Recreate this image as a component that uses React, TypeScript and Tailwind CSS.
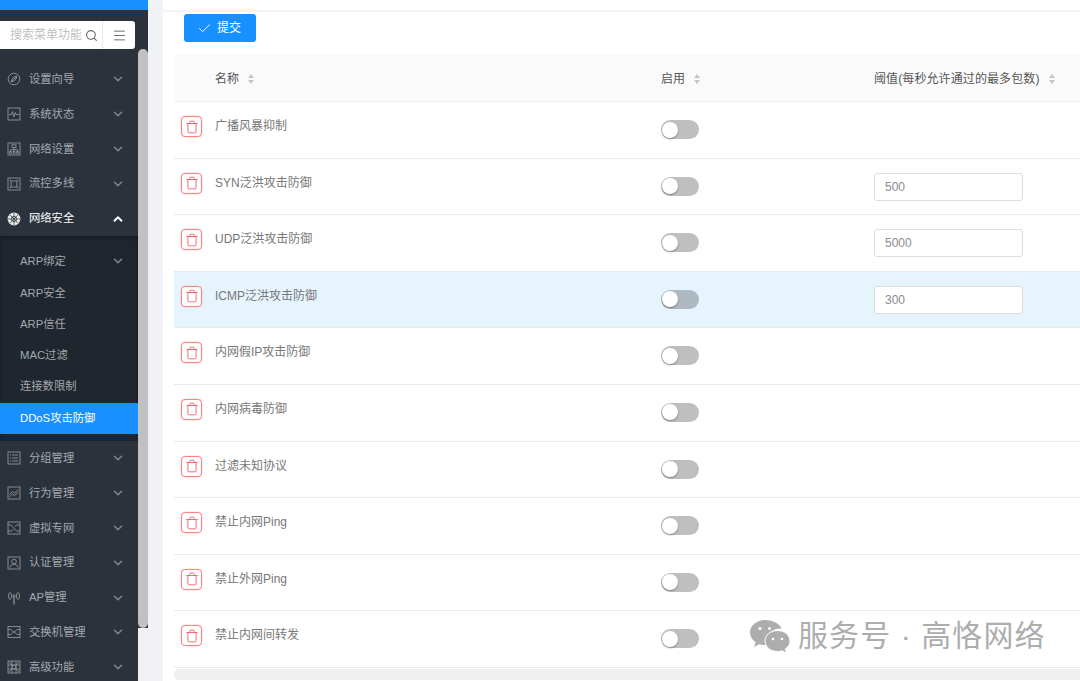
import { Check, ChevronDown, ChevronUp, Menu, Search, Trash } from "lucide-react";
import type { ReactNode } from "react";

const font = "font-['Liberation_Sans','Noto_Sans_CJK_SC',sans-serif]";

function IconBox({ children }: { children: ReactNode }) {
  return (
    <svg viewBox="0 0 14 14" className="h-[14px] w-[14px] shrink-0 text-[#8f949a]" fill="none" stroke="currentColor" strokeWidth="0.9">
      {children}
    </svg>
  );
}

const icons: Record<string, ReactNode> = {
  wizard: (
    <IconBox>
      <circle cx="7" cy="7" r="5.800" />
      <path d="M4.200 9.800C4.200 7 7 4.200 9.800 4.200 9.800 7 7 9.800 4.200 9.800zM4.200 9.800 9.800 4.200" />
    </IconBox>
  ),
  status: (
    <IconBox>
      <rect x="1" y="1" width="12" height="12" />
      <path d="M2 7.500h2.200l1.200-3 1.400 5.400L8.200 5.500l.8 2H12" />
    </IconBox>
  ),
  network: (
    <IconBox>
      <rect x="1" y="1" width="12" height="12" />
      <rect x="5" y="2.800" width="4" height="2.600" />
      <path d="M7 5.400v2.200M3.500 9.500V7.600h7v1.900M7 7.600v1.900" />
      <path d="M2.500 9.500h2v1.800h-2zM6 9.500h2v1.800H6zM9.500 9.500h2v1.800h-2z" />
    </IconBox>
  ),
  flow: (
    <IconBox>
      <rect x="1" y="1" width="12" height="12" />
      <path d="M3 3c1 .8 1.600 1 2.200 1h3.600c.6 0 1.200-.2 2.200-1-.8 1.200-1.300 2.600-1.300 4s.5 2.800 1.300 4c-1-.8-1.600-1-2.200-1H5.200c-.6 0-1.200.2-2.200 1 .8-1.200 1.300-2.600 1.300-4S3.800 4.200 3 3z" />
    </IconBox>
  ),
  security: (
    <svg viewBox="0 0 14 14" className="h-[14px] w-[14px] shrink-0 text-[#e8e8e8]">
      <circle cx="7" cy="7" r="6.400" fill="currentColor" />
      <path d="M1 7h12M7 1v12M3 3l8 8M11 3l-8 8" stroke="#2b323c" strokeWidth="0.7" />
      <circle cx="7" cy="7" r="2.600" fill="none" stroke="#2b323c" strokeWidth="0.8" />
    </svg>
  ),
  group: (
    <IconBox>
      <rect x="1" y="1" width="12" height="12" />
      <path d="M5 4h6M5 7h6M5 10h6M3 4h1M3 7h1M3 10h1" />
    </IconBox>
  ),
  behavior: (
    <IconBox>
      <rect x="1" y="1" width="12" height="12" />
      <path d="M2.500 8.500 5.500 5.500l2 1.500 4-3.500M2.500 11 5.500 8l2 1.500 4-3.500" />
    </IconBox>
  ),
  vpn: (
    <IconBox>
      <rect x="1" y="1" width="12" height="12" />
      <path d="M1 4h3l5.500 6H13M4.500 10H1M13 4H9.500L8 5.600M6 8.400 4.500 10" />
    </IconBox>
  ),
  auth: (
    <IconBox>
      <rect x="1" y="1" width="12" height="12" />
      <circle cx="7" cy="5.500" r="2.300" />
      <path d="M3 11.500c.6-2.200 2-3.200 4-3.200s3.400 1 4 3.200" />
    </IconBox>
  ),
  ap: (
    <IconBox>
      <circle cx="7" cy="5" r="1.200" />
      <path d="M7 6.200V13.500" strokeWidth="1.300" />
      <ellipse cx="3" cy="5" rx="1.500" ry="3.400" />
      <ellipse cx="11" cy="5" rx="1.500" ry="3.400" />
    </IconBox>
  ),
  switch: (
    <IconBox>
      <rect x="1" y="1.500" width="12" height="11" />
      <path d="M1 4.500h2.500c1.500 0 2 2.500 3.500 2.500s2-2.500 3.500-2.500H13M1 9.500h2.500C5 9.500 5.500 7 7 7s2 2.500 3.500 2.500H13" />
    </IconBox>
  ),
  advanced: (
    <IconBox>
      <rect x="1" y="1" width="12" height="12" />
      <path d="M1 5h12M1 9h12M5 1v12M9 1v12" />
      <circle cx="7" cy="7" r="2" />
      <path d="M2 2l3 3M12 2 9 5M2 12l3-3M12 12 9 9" />
    </IconBox>
  ),
};

function MenuRow({ icon, label, open }: { icon: string; label: string; open?: boolean }) {
  return (
    <div className={`flex h-[34.800px] items-center pl-[7px] pr-[13px] text-[11.300px] ${open ? "text-white" : "text-[#a3a8ae]"}`}>
      {icons[icon]}
      <span className="ml-[8px] flex-1 whitespace-nowrap">{label}</span>
      {open ? (
        <ChevronUp className="h-[14px] w-[14px] text-white" strokeWidth={3.200} />
      ) : (
        <ChevronDown className="h-[14px] w-[14px] text-[#7f848b]" strokeWidth={2.800} />
      )}
    </div>
  );
}

const topMenu = [
  { icon: "wizard", label: "设置向导" },
  { icon: "status", label: "系统状态" },
  { icon: "network", label: "网络设置" },
  { icon: "flow", label: "流控多线" },
];

const bottomMenu = [
  { icon: "group", label: "分组管理" },
  { icon: "behavior", label: "行为管理" },
  { icon: "vpn", label: "虚拟专网" },
  { icon: "auth", label: "认证管理" },
  { icon: "ap", label: "AP管理" },
  { icon: "switch", label: "交换机管理" },
  { icon: "advanced", label: "高级功能" },
];

const rows = [
  { name: "广播风暴抑制" },
  { name: "SYN泛洪攻击防御", value: "500" },
  { name: "UDP泛洪攻击防御", value: "5000" },
  { name: "ICMP泛洪攻击防御", value: "300", hover: true },
  { name: "内网假IP攻击防御" },
  { name: "内网病毒防御" },
  { name: "过滤未知协议" },
  { name: "禁止内网Ping" },
  { name: "禁止外网Ping" },
  { name: "禁止内网间转发" },
];

function Sorter() {
  return (
    <span className="ml-[9px] inline-flex flex-col gap-[1.500px]">
      <span className="h-0 w-0 border-x-[3.500px] border-b-[4.500px] border-x-transparent border-b-[#c4c4c4]" />
      <span className="h-0 w-0 border-x-[3.500px] border-t-[4.500px] border-x-transparent border-t-[#c4c4c4]" />
    </span>
  );
}

function Sidebar() {
  return (
    <aside className="relative h-full w-[148px] shrink-0 overflow-hidden bg-[#2b323c]">
      <div className="h-[10px] bg-[#1890ff]" />
      <div className="mt-[11px] flex h-[28px] w-[135px] items-center rounded-r-[3px] bg-white">
        <span className="ml-[10px] flex-1 whitespace-nowrap text-[12px] text-[#bfbfbf]">搜索菜单功能</span>
        <Search className="mr-[4px] h-[13px] w-[13px] text-[#666]" strokeWidth={2} />
        <span className="flex h-full w-[33px] items-center justify-center border-l border-[#e8e8e8]">
          <Menu className="h-[15px] w-[15px] text-[#666]" strokeWidth={1.500} />
        </span>
      </div>
      <div className="w-[138px] pt-[13px]">
        {topMenu.map((m) => (
          <MenuRow key={m.label} icon={m.icon} label={m.label} />
        ))}
        <MenuRow icon="security" label="网络安全" open />
        <div className="h-[205px] bg-[#1f262d] pt-[8px] text-[11.300px] text-[#a3a8ae] shadow-[inset_0_2px_4px_rgba(0,0,0,0.3)]">
          <div className="flex h-[34px] items-center pl-[20px] pr-[13px]">
            <span className="flex-1">ARP绑定</span>
            <ChevronDown className="h-[14px] w-[14px] text-[#7f848b]" strokeWidth={2.800} />
          </div>
          {["ARP安全", "ARP信任", "MAC过滤", "连接数限制"].map((s) => (
            <div key={s} className="flex h-[31px] items-center pl-[20px]">
              {s}
            </div>
          ))}
          <div className="mt-[1px] flex h-[31px] items-center bg-[#1890ff] pl-[20px] text-white">DDoS攻击防御</div>
        </div>
        {bottomMenu.map((m) => (
          <MenuRow key={m.label} icon={m.icon} label={m.label} />
        ))}
      </div>
      {/* overlay scrollbar */}
      <div className="absolute right-0 top-[49px] h-[579px] w-[10px] rounded-[5px] bg-[#c1c1c1]" />
      <div className="absolute bottom-0 right-0 top-[628px] w-[10px] bg-[#f1f1f1]" />
    </aside>
  );
}

function Switch({ hover }: { hover?: boolean }) {
  return (
    <span className={`flex h-[19px] w-[38px] items-center rounded-full pl-[1px] ${hover ? "bg-[#aeb9c1]" : "bg-[#bfbfbf]"}`}>
      <span className="h-[16px] w-[16px] rounded-full bg-white shadow-[0_1px_2px_rgba(0,0,0,0.35)]" />
    </span>
  );
}

function Row({ name, value, hover }: { name: string; value?: string; hover?: boolean }) {
  return (
    <div className={`flex h-[56.600px] border-b border-[#ebebeb] text-[12px] text-[#777] ${hover ? "bg-[#e6f4fe]" : "bg-white"}`}>
      <div className="w-[41px] pl-[7px] pt-[14px]">
        <span className="flex h-[21px] w-[21px] items-center justify-center rounded-[4px] border border-[#ff8080] bg-white text-[#ef5a62] shadow-[0_0_2px_rgba(255,120,120,0.4)]">
          <Trash className="h-[14px] w-[14px]" strokeWidth={1.500} />
        </span>
      </div>
      <div className="w-[446px] pt-[15px]">{name}</div>
      <div className="w-[213px] pt-[18px]">
        <Switch hover={hover} />
      </div>
      <div className="flex-1 pt-[14px]">
        {value && (
          <div className="flex h-[28px] w-[149px] items-center rounded-[3px] border border-[#dedede] bg-white pl-[10px] text-[#8c8c8c]">
            {value}
          </div>
        )}
      </div>
    </div>
  );
}

export default function App() {
  return (
    <div className={`${font} relative flex h-[681px] w-[1080px] overflow-hidden bg-[#f0f2f5]`}>
      <Sidebar />
      <main className="ml-[15px] flex min-w-0 flex-1 flex-col bg-white">
        <div className="h-[12px] border-b-2 border-[#f4f4f4]" />
        <div className="h-[43px] pl-[21px] pt-[2px]">
          <button className="flex h-[28px] w-[72px] items-center justify-center gap-[5px] rounded-[3px] bg-[#1890ff] pr-[2px] text-[12px] text-white">
            <Check className="h-[15px] w-[15px]" strokeWidth={1.500} />
            提交
          </button>
        </div>
        <div className="ml-[11px] flex-1">
          <div className="flex h-[47px] items-center border-b border-[#efefef] bg-[#fafafa] pt-[2px] text-[12px] text-[#555]">
            <div className="flex w-[487px] items-center pl-[41px]">
              名称
              <Sorter />
            </div>
            <div className="flex w-[213px] items-center">
              启用
              <Sorter />
            </div>
            <div className="flex flex-1 items-center whitespace-nowrap tracking-[0.100px]">
              阈值(每秒允许通过的最多包数)
              <Sorter />
            </div>
          </div>
          {rows.map((r) => (
            <Row key={r.name} {...r} />
          ))}
          <div className="mt-[1px] h-[11px] rounded-l-full bg-[#efefef]" />
        </div>
      </main>
      {/* watermark */}
      <div className="absolute left-[749px] top-[618px] flex items-center text-[#adadad]">
        <svg viewBox="0 0 42 36" className="h-[36px] w-[42px]" fill="currentColor">
          <path d="M16 2C7.700 2 1 7.600 1 14.500c0 3.900 2.200 7.400 5.600 9.700L5 29l5.300-2.800c1.700.5 3.600.8 5.700.8.500 0 1 0 1.500-.1-.4-1.200-.6-2.400-.6-3.700 0-7 6.500-12.600 14.500-12.600.4 0 .8 0 1.200.1C30.800 5.500 24 2 16 2z" />
          <path d="M41 23c0-5.800-5.600-10.500-12.500-10.500S16 17.200 16 23s5.600 10.500 12.500 10.500c1.600 0 3.100-.2 4.500-.7L37.500 35l-1.200-4C39.200 29 41 26.200 41 23z" stroke="#fff" strokeWidth="1" />
          <circle cx="11" cy="10.500" r="1.500" fill="#fff" />
          <circle cx="20.500" cy="10.500" r="1.500" fill="#fff" />
          <circle cx="24" cy="21" r="1.300" fill="#fff" />
          <circle cx="33" cy="21" r="1.300" fill="#fff" />
        </svg>
        <span className="ml-[7px] whitespace-nowrap text-[30px] leading-none tracking-[1.100px]">服务号 · 高恪网络</span>
      </div>
    </div>
  );
}
